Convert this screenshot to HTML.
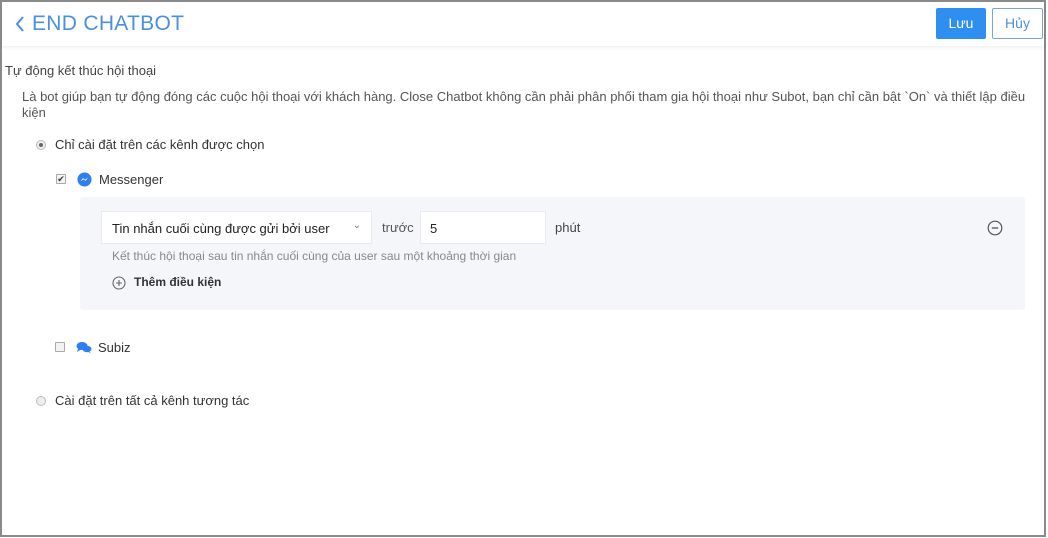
<!DOCTYPE html>
<html><head><meta charset="utf-8"><style>
*{box-sizing:border-box;margin:0;padding:0}
body{width:1048px;height:538px;background:#fff;font-family:"Liberation Sans",sans-serif;color:#333;position:relative;overflow:hidden}
.frame{position:absolute;left:0;top:0;width:1046px;height:537px;border:2px solid #8a8a8a}
.hdr{position:absolute;left:2px;top:2px;width:1042px;height:44px;background:#fff;box-shadow:0 2px 3px rgba(0,0,0,.06)}
.t{position:absolute;left:30px;top:10px;font-size:21px;color:#4a90e2;letter-spacing:.3px}
.btn{position:absolute;top:6px;height:31px;border-radius:2px;font-size:14px;line-height:29px;text-align:center}
.abs{position:absolute;white-space:nowrap}
.s13{font-size:13px}
.radio{position:absolute;width:10px;height:10px;border-radius:50%;border:1px solid #bbb;background:#eee}
.cb{position:absolute;width:10px;height:10px;border:1px solid #aaa;background:#f3f3f3;border-radius:1px}
</style></head><body>
<div class="frame"></div>
<div class="hdr">
<svg class="abs" style="left:13px;top:13px" width="10" height="18" viewBox="0 0 10 18"><path d="M8 2 L2 9 L8 16" fill="none" stroke="#4a90e2" stroke-width="2"/></svg>
<div class="t">END CHATBOT</div>
<div class="btn" style="left:934px;width:50px;background:#2f8ff0;color:#fff;border:1px solid #2f8ff0">Lưu</div>
<div class="btn" style="left:990px;width:51px;background:#fff;color:#4a90e2;border:1px solid #7aa7d8">Hủy</div>
</div>
<div class="abs s13" style="left:5px;top:63px;color:#444">Tự động kết thúc hội thoại</div>
<div class="abs s13" style="left:22px;top:89px;color:#555;white-space:normal;width:1010px;line-height:16px">Là bot giúp bạn tự động đóng các cuộc hội thoại với khách hàng. Close Chatbot không cần phải phân phối tham gia hội thoại như Subot, bạn chỉ cần bật `On` và thiết lập điều kiện</div>
<div class="radio" style="left:36px;top:140px"><div style="position:absolute;left:2px;top:2px;width:4px;height:4px;border-radius:50%;background:#666"></div></div>
<div class="abs s13" style="left:55px;top:137px">Chỉ cài đặt trên các kênh được chọn</div>
<div class="cb" style="left:56px;top:174px;font-size:9px;line-height:8px;text-align:center">✔</div>
<svg class="abs" style="left:77px;top:172px" width="15" height="15" viewBox="0 0 16 16"><circle cx="8" cy="8" r="7.5" fill="#2e7ff0"/><path d="M3.5 10 L6.5 6.5 L8.5 8.3 L12 5.8 L9 9.5 L7 7.8 Z" fill="#fff"/></svg>
<div class="abs s13" style="left:99px;top:172px">Messenger</div>
<div class="abs" style="left:80px;top:197px;width:945px;height:113px;background:#f4f6f9;border-radius:3px"></div>
<div class="abs s13" style="left:101px;top:211px;width:271px;height:33px;background:#fff;border:1px solid #e8eaee;padding:9px 10px;color:#222">Tin nhắn cuối cùng được gửi bởi user<span style="position:absolute;right:10px;top:8px;font-size:10px;color:#777">&#8964;</span></div>
<div class="abs s13" style="left:382px;top:220px;color:#555">trước</div>
<div class="abs s13" style="left:420px;top:211px;width:126px;height:33px;background:#fff;border:1px solid #e8eaee;padding:9px 9px;color:#222">5</div>
<div class="abs s13" style="left:555px;top:220px;color:#444">phút</div>
<div class="abs" style="left:112px;top:249px;font-size:12px;color:#888">Kết thúc hội thoại sau tin nhắn cuối cùng của user sau một khoảng thời gian</div>
<svg class="abs" style="left:112px;top:276px" width="14" height="14" viewBox="0 0 14 14"><circle cx="7" cy="7" r="6" fill="none" stroke="#666" stroke-width="1.1"/><path d="M4 7h6M7 4v6" stroke="#666" stroke-width="1.1"/></svg>
<div class="abs" style="left:134px;top:275px;font-size:12px;font-weight:bold;color:#333">Thêm điều kiện</div>
<svg class="abs" style="left:987px;top:220px" width="16" height="16" viewBox="0 0 16 16"><circle cx="8" cy="8" r="6.8" fill="none" stroke="#555" stroke-width="1.2"/><path d="M4.8 8h6.4" stroke="#555" stroke-width="1.3"/></svg>
<div class="cb" style="left:55px;top:342px"></div>
<svg class="abs" style="left:76px;top:341px" width="16" height="13" viewBox="0 0 16 13"><ellipse cx="6" cy="5" rx="5.5" ry="4" fill="#2e7ff0"/><path d="M2 8 L1 11 L5 8.5Z" fill="#2e7ff0"/><ellipse cx="11" cy="8" rx="4.5" ry="3.2" fill="#2e7ff0"/><path d="M13 10 L15 12.5 L11.5 10.5Z" fill="#2e7ff0"/></svg>
<div class="abs s13" style="left:98px;top:340px">Subiz</div>
<div class="radio" style="left:36px;top:396px"></div>
<div class="abs s13" style="left:55px;top:393px">Cài đặt trên tất cả kênh tương tác</div>
</body></html>
